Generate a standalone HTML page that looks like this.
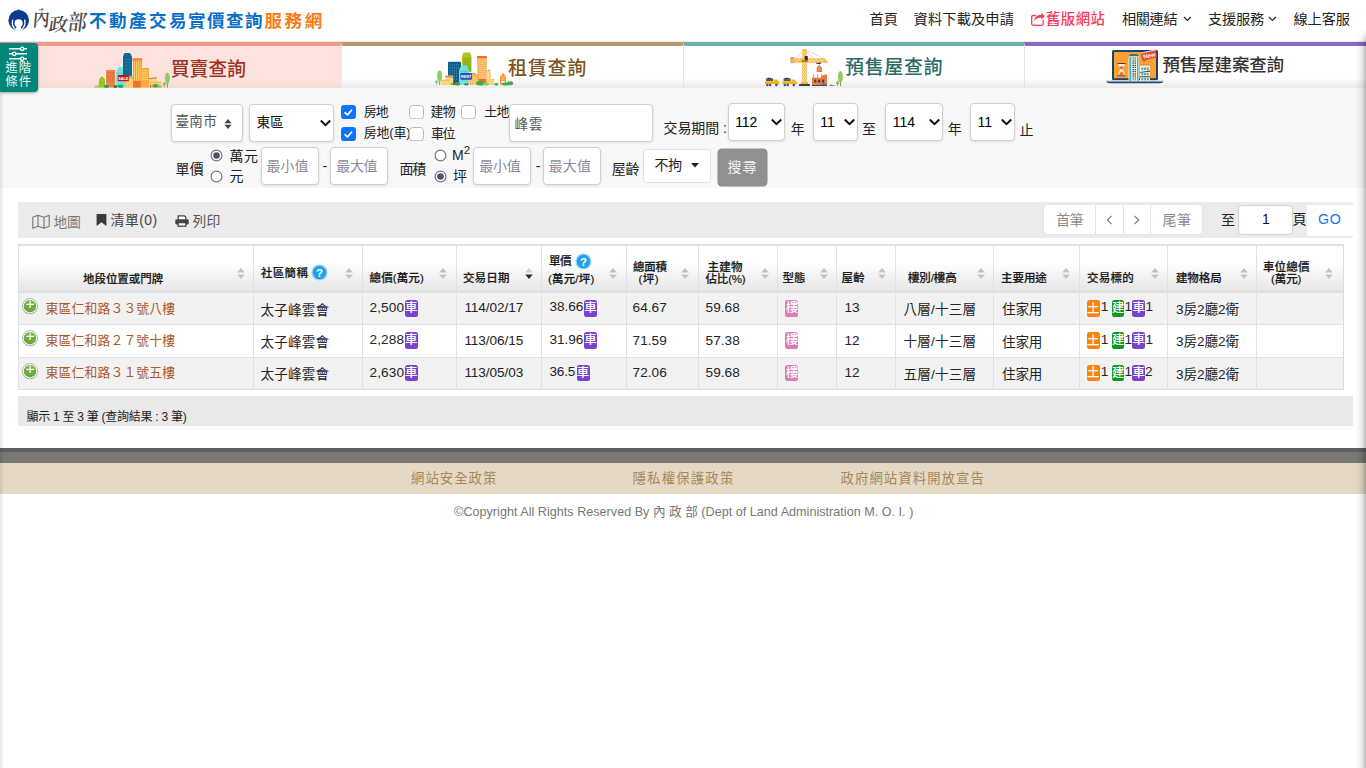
<!DOCTYPE html>
<html lang="zh-Hant"><head><meta charset="utf-8"><title>內政部不動產交易實價查詢服務網</title>
<style>
html,body{margin:0;padding:0;background:#fff;width:1366px;height:768px;overflow:hidden}
body{position:relative;font-family:"Liberation Sans","Noto Sans CJK TC",sans-serif;-webkit-font-smoothing:antialiased}
.b{position:absolute;display:block}
.t{position:absolute;white-space:nowrap;line-height:1.2;font-family:"Liberation Sans","Noto Sans CJK TC",sans-serif}
</style></head><body>
<svg class="b" width="0" height="0" style="left:0;top:0"><defs><linearGradient id="pgrad" x1="0" y1="0" x2="0" y2="1"><stop offset="0" stop-color="#79b843"/><stop offset="1" stop-color="#66a834"/></linearGradient></defs></svg>
<header class="b" style="left:0;top:0;width:1366px;height:42px;background:#fff">
<svg class="b" style="left:6px;top:6px" width="26" height="26" viewBox="6 6 26 26">
<circle cx="18.700" cy="20.400" r="10.300" fill="#083a8e"/><path d="M16.600 11.200q1.400-.6 2-2.100.7 1.500 2.100 2.100z" fill="#083a8e"/>
<circle cx="18.600" cy="23.300" r="4.100" fill="#fff"/><path d="M16.700 26.200l-1.700 5.200h7.300l-1.700-5.200z" fill="#fff"/>
<path d="M12.700 19.600c-1.100 4.300.200 8 3.600 10.500M24.600 19.600c1.100 4.300-.200 8-3.600 10.500" stroke="#fff" stroke-width="1.350" fill="none"/>
</svg>
<span class="t" id="moi1" style="left:32.50px;top:7.00px;font-size:17px;color:#4a4a4a;font-weight:600;font-family:'Noto Serif CJK SC','Liberation Serif',serif;transform-origin:0 50%;transform:scaleY(1.25) skewX(-6deg);">內</span>
<span class="t" id="moi2" style="left:48.50px;top:12.20px;font-size:19px;color:#4a4a4a;font-weight:600;font-family:'Noto Serif CJK SC','Liberation Serif',serif;transform-origin:0 50%;transform:scaleY(.95) skewX(-8deg);">政</span>
<span class="t" id="moi3" style="left:68.00px;top:9.80px;font-size:19px;color:#4a4a4a;font-weight:600;font-family:'Noto Serif CJK SC','Liberation Serif',serif;transform-origin:0 50%;transform:scaleY(1.15) skewX(-8deg);">部</span>
<span class="t" id="title1" style="left:89.00px;top:10.65px;font-size:17.5px;color:#0b6fc9;font-weight:700;"><span style="letter-spacing:2.5px">不動產交</span><span style="letter-spacing:1.5px">易實價查</span>詢</span>
<span class="t" id="title2" style="left:264.50px;top:10.65px;font-size:17.5px;color:#fa7c16;font-weight:700;letter-spacing:2.625px;">服務網</span>
<span class="t" id="nav1" style="left:869.40px;top:10.70px;font-size:14.2px;color:#222;letter-spacing:0.180px;">首頁</span>
<span class="t" id="nav2" style="left:913.60px;top:10.70px;font-size:14.2px;color:#222;letter-spacing:0.165px;">資料下載及申請</span>
<svg class="b" style="left:1030px;top:12px" width="16" height="15" viewBox="1030 12 16 15"><path d="M1035.600 15.500h-2.400a1.500 1.500 0 0 0-1.500 1.500v6.800a1.500 1.500 0 0 0 1.500 1.500h8.400a1.500 1.500 0 0 0 1.500-1.500v-3.300" fill="none" stroke="#f6395c" stroke-width="1.300" stroke-linecap="round"/><path d="M1041.200 12.700l3.700 3.400-3.700 3.500v-2.200c-3.200 0-5.400 1.200-7.100 3.700.300-3.900 3.200-6.200 7.100-6.300z" fill="#f6395c"/></svg>
<span class="t" id="nav3" style="left:1046.00px;top:10.97px;font-size:14.4px;color:#f6395c;font-weight:500;letter-spacing:0.480px;">舊版網站</span>
<span class="t" id="nav4" style="left:1121.90px;top:10.70px;font-size:14.2px;color:#222;letter-spacing:-0.330px;">相關連結</span>
<svg class="b" style="left:1182.700px;top:16.200px" width="9" height="6" viewBox="0 0 9 6" fill="none" stroke="#222" stroke-width="1.150"><path d="M1 1l3.400 3.500L7.800 1"/></svg>
<span class="t" id="nav5" style="left:1207.90px;top:10.70px;font-size:14.2px;color:#222;letter-spacing:-0.120px;">支援服務</span>
<svg class="b" style="left:1268.300px;top:16.200px" width="9" height="6" viewBox="0 0 9 6" fill="none" stroke="#222" stroke-width="1.150"><path d="M1 1l3.400 3.500L7.800 1"/></svg>
<span class="t" id="nav6" style="left:1293.40px;top:10.70px;font-size:14.2px;color:#222;letter-spacing:-0.030px;">線上客服</span>
</header>
<nav class="b" style="left:0;top:41px;width:1366px;height:47px">
<div class="b" style="left:0px;top:1px;width:341px;height:46px;background:linear-gradient(#fde3df 0,#fde3df 78%,#f9dad5 100%);border-top:4px solid #ee9b8d;box-sizing:border-box"></div>
<div class="b" style="left:341px;top:1px;width:342px;height:46px;background:linear-gradient(#fff 0,#fff 76%,#ebebeb 100%);border-top:4px solid #b9996d;box-sizing:border-box;border-left:1px solid #ececec"></div>
<div class="b" style="left:683px;top:1px;width:341px;height:46px;background:linear-gradient(#fff 0,#fff 76%,#ebebeb 100%);border-top:4px solid #6fb1a8;box-sizing:border-box;border-left:1px solid #e4e4e4"></div>
<div class="b" style="left:1024px;top:1px;width:342px;height:46px;background:linear-gradient(#fff 0,#fff 76%,#ebebeb 100%);border-top:4px solid #8869c4;box-sizing:border-box;border-left:1px solid #e4e4e4"></div>
<div class="b" style="left:0px;top:0px;width:1366px;height:1px;background:#e8e8e8"></div>
</nav>
<svg class="b" style="left:90px;top:46px" width="90" height="46" viewBox="90 46 90 46">
<ellipse cx="97.5" cy="86.6" rx="3.6" ry="1.6" fill="#a9da6e"/>
<path d="M98.9 87.5v-6.5q0-2 1.6-3.4l1.5-1.6 1.5 1.6q1.6 1.4 1.6 3.4v6.500z" fill="#9cc52c"/>
<path d="M99.6 81.5h4.800M99.400 83.500h5.200" stroke="#8db322" stroke-width=".6"/>
<rect x="106.1" y="70" width="9" height="17.5" rx=".5" fill="#f0804a"/>
<g fill="#d9622f"><rect x="107.4" y="72" width="1.400" height=".9"/><rect x="109.9" y="72" width="1.400" height=".9"/><rect x="112.4" y="72" width="1.400" height=".9"/><rect x="107.4" y="74.2" width="1.400" height=".9"/><rect x="109.9" y="74.2" width="1.400" height=".9"/><rect x="112.4" y="74.2" width="1.400" height=".9"/><rect x="107.4" y="76.4" width="1.400" height=".9"/><rect x="109.9" y="76.4" width="1.400" height=".9"/><rect x="112.4" y="76.4" width="1.400" height=".9"/><rect x="107.4" y="78.6" width="1.400" height=".9"/><rect x="109.9" y="78.6" width="1.400" height=".9"/><rect x="112.4" y="78.6" width="1.400" height=".9"/><rect x="107.4" y="80.8" width="1.400" height=".9"/><rect x="109.9" y="80.8" width="1.400" height=".9"/><rect x="112.4" y="80.8" width="1.400" height=".9"/></g>
<path d="M116 87.5v-15.500l1.300-2.600 1.400-2.400h4.600l1.300 2.400 1 2.600v15.500z" fill="#72e1e0"/>
<path d="M117.500 72.500h6.500v1.800h-6.500z" fill="#4fcfd2" opacity=".7"/>
<path d="M123 75v-18.500l.9-2.200.8-1.300h5.300l.8 1.300 1.200 2.200v18.500l-3 5.500h-3.500z" fill="#0e6a8f"/>
<g stroke="#3b8bab" stroke-width=".8"><path d="M124.800 59.500h5.600M124.800 62.500h5.600M124.800 65.800h5.600M124.800 69h5.600"/></g>
<g stroke="#0e6a8f" stroke-width=".5"><path d="M126.200 58v13M127.600 58v13M129 58v13"/></g>
<rect x="125.6" y="77.2" width="7.600" height="10.300" fill="#f9b94c"/>
<rect x="125.4" y="75.800" width="7.800" height="1.700" fill="#7fc87a"/>
<g fill="#fbd77a"><rect x="127" y="79" width="1.300" height="8.500"/><rect x="129.400" y="79" width="1.300" height="8.500"/><rect x="131.600" y="79" width="1.200" height="8.500"/></g>
<rect x="132.600" y="58.300" width="9.800" height="2.200" fill="#f07a3e"/>
<rect x="133" y="60.300" width="9" height="27.200" fill="#f8973a"/>
<g fill="#fcd36e"><rect x="134.100" y="61.500" width=".9" height="19.200"/><rect x="136" y="61.500" width=".9" height="19.200"/><rect x="137.900" y="61.500" width=".9" height="19.200"/><rect x="139.800" y="61.500" width=".9" height="19.200"/></g>
<rect x="133" y="81" width="8" height="6.500" fill="#ef7137"/>
<rect x="140.700" y="68" width="8.300" height="19.500" fill="#ffa83c"/>
<g fill="#ffd66e"><rect x="141.800" y="70" width="6" height=".9"/><rect x="141.800" y="72.300" width="6" height=".9"/><rect x="141.800" y="74.600" width="6" height=".9"/><rect x="141.800" y="76.900" width="6" height=".9"/><rect x="141.800" y="79.200" width="6" height=".9"/></g>
<rect x="149" y="78" width="7.800" height="9.500" fill="#f6dd7e"/>
<path d="M149 78.300l7.800-1.100v1l-7.800 1.100z" fill="#ea5a40"/>
<rect x="149" y="82" width="12" height="5.500" fill="#f4d078"/>
<rect x="149" y="81.700" width="12" height=".8" fill="#f0a060"/>
<rect x="150" y="85" width="1.300" height="2.500" fill="#e9573e"/>
<ellipse cx="106.400" cy="86.300" rx="2.700" ry="1.600" fill="#2f9f48"/>
<ellipse cx="115.400" cy="86.600" rx="2" ry="1.300" fill="#1f7f3d"/>
<ellipse cx="120.500" cy="86.200" rx="3.200" ry="1.700" fill="#35a84c"/>
<ellipse cx="155.500" cy="85.800" rx="3.200" ry="1.900" fill="#3fae49"/>
<ellipse cx="160" cy="86.500" rx="2.300" ry="1.300" fill="#8fd14f"/>
<rect x="123" y="80.800" width=".7" height="6.700" fill="#b9b9c6"/>
<rect x="117.800" y="75" width="11.100" height="6.300" rx="1" fill="#c4161c"/>
<text x="123.350" y="79.750" text-anchor="middle" font-family="Liberation Sans,sans-serif" font-weight="700" font-size="3.800" fill="#fff">SALE</text>
<rect x="167" y="79" width=".8" height="8.500" fill="#a0664a"/>
<ellipse cx="167.400" cy="78.200" rx="2.400" ry="5.600" fill="#8dcf5f"/>
<rect x="164.100" y="84" width=".6" height="3.500" fill="#a0664a"/>
<circle cx="164.400" cy="83.800" r="1.600" fill="#7cc850"/>
</svg>
<svg class="b" style="left:430px;top:46px" width="90" height="46" viewBox="430 46 90 46">
<rect x="439.300" y="78" width=".8" height="7" fill="#a0664a"/>
<ellipse cx="439.600" cy="75.800" rx="2.500" ry="5.600" fill="#8dcf5f"/>
<rect x="436.300" y="82" width=".6" height="3" fill="#c9a08a"/>
<circle cx="436.600" cy="81.800" r="1.600" fill="#8dd35f"/>
<rect x="448" y="61.700" width="13" height="23.300" rx=".8" fill="#0f5f8a"/>
<g fill="#4a93b6"><rect x="449.700" y="64.200" width=".7" height="1.600"/><rect x="451.800" y="64.200" width=".7" height="1.600"/><rect x="453.900" y="64.200" width=".7" height="1.600"/><rect x="456" y="64.200" width=".7" height="1.600"/><rect x="458.100" y="64.200" width=".7" height="1.600"/><rect x="449.700" y="67" width=".7" height="1.600"/><rect x="451.800" y="67" width=".7" height="1.600"/><rect x="453.900" y="67" width=".7" height="1.600"/><rect x="456" y="67" width=".7" height="1.600"/><rect x="458.100" y="67" width=".7" height="1.600"/><rect x="449.700" y="69.800" width=".7" height="1.600"/><rect x="451.800" y="69.800" width=".7" height="1.600"/><rect x="453.900" y="69.800" width=".7" height="1.600"/><rect x="456" y="69.800" width=".7" height="1.600"/><rect x="449.700" y="72.600" width=".7" height="1.600"/><rect x="451.800" y="72.600" width=".7" height="1.600"/><rect x="453.900" y="72.600" width=".7" height="1.600"/><rect x="456" y="72.600" width=".7" height="1.600"/><rect x="453.900" y="75.400" width=".7" height="1.600"/><rect x="456" y="75.400" width=".7" height="1.600"/><rect x="453.900" y="78.200" width=".7" height="1.600"/><rect x="456" y="78.200" width=".7" height="1.600"/></g>
<rect x="441" y="80" width="12" height="5" fill="#f7d876"/>
<rect x="445.500" y="75.500" width="7.700" height="9.500" fill="#f7d876"/>
<path d="M445 75.800l8.200 1v.9l-8.200-1z" fill="#ea5a40"/>
<rect x="441" y="79.800" width="8" height=".8" fill="#f2a468"/>
<rect x="451.200" y="83" width="1.300" height="2" fill="#e9573e"/>
<path d="M462 72v-16l.8-1.500.9-2h6.300l.9 2 .6 1.500v16z" fill="#a9c621"/>
<g stroke="#7f9c12" stroke-width=".9"><path d="M464 57.500v14M466 57.500v14M468 57.500v14M470 57.500v14"/></g>
<path d="M459 85v-14.500l1.200-2.700 1.300-2.600h5l1.300 2.600 1.200 2.700v14.500z" fill="#72e1e0"/>
<rect x="460.200" y="70.300" width="7.600" height="2.200" fill="#4fcfd2" opacity=".7"/>
<rect x="469.500" y="74.300" width="9.700" height="10.700" fill="#f9b14c"/>
<rect x="469.300" y="72.900" width="6.500" height="1.800" fill="#7fc87a"/>
<g fill="#fbd47a"><rect x="471" y="76.500" width="1.200" height="8.500"/><rect x="473.300" y="76.500" width="1.200" height="8.500"/><rect x="475.600" y="76.500" width="1.200" height="8.500"/></g>
<rect x="477" y="56" width="10" height="2.200" rx=".5" fill="#f06a35"/>
<rect x="477.300" y="58" width="9.400" height="27" fill="#f9a65e"/>
<g fill="#fcd47a"><rect x="478.300" y="59.300" width="7.400" height=".9"/><rect x="478.300" y="61.300" width="7.400" height=".9"/><rect x="478.300" y="63.300" width="7.400" height=".9"/><rect x="478.300" y="65.300" width="7.400" height=".9"/><rect x="478.300" y="67.300" width="7.400" height=".9"/><rect x="478.300" y="69.300" width="7.400" height=".9"/><rect x="478.300" y="71.300" width="7.400" height=".9"/><rect x="478.300" y="73.300" width="7.400" height=".9"/><rect x="478.300" y="75.300" width="7.400" height=".9"/><rect x="478.300" y="77.300" width="7.400" height=".9"/></g>
<rect x="479" y="79" width="7" height="6" fill="#ee6a37"/>
<path d="M486.700 85v-13.300l1-1.700h2.300l1 1.700v13.300z" fill="#f5d47c"/>
<rect x="488" y="69.800" width="2" height="1" fill="#f4845a"/>
<g fill="#fff4c8"><rect x="488.400" y="73" width=".9" height=".9"/><rect x="488.400" y="75" width=".9" height=".9"/><rect x="488.400" y="77" width=".9" height=".9"/><rect x="488.400" y="79" width=".9" height=".9"/></g>
<rect x="491" y="79.500" width="3.200" height="5.500" fill="#f5d47c"/>
<rect x="491.600" y="79" width="2" height=".8" fill="#f4845a"/>
<ellipse cx="457.200" cy="83.700" rx="3" ry="1.800" fill="#4a9a2a"/>
<ellipse cx="466.300" cy="84.300" rx="1.900" ry="1.200" fill="#1f8a3d"/>
<ellipse cx="480.300" cy="83.200" rx="4.300" ry="2.300" fill="#3fae49"/>
<ellipse cx="486" cy="84" rx="3" ry="1.500" fill="#8fd14f"/>
<ellipse cx="496.300" cy="84.200" rx="2.100" ry="1.200" fill="#3fae49"/>
<rect x="466" y="79.500" width=".7" height="5" fill="#b9b9c6"/>
<rect x="460.300" y="73" width="11.700" height="6.700" rx=".8" fill="#2f4fb5"/>
<text x="466.150" y="77.950" text-anchor="middle" font-family="Liberation Sans,sans-serif" font-weight="700" font-size="3.800" fill="#fff">RENT</text>
<path d="M500 85v-8.500l1.200-1.500 1.800-2.200 1.800 2.200 1.200 1.500v8.500z" fill="#fb9b34"/>
<rect x="501.100" y="77.300" width="3.800" height=".8" fill="#fdc070"/><rect x="501.100" y="79" width="3.800" height=".8" fill="#fdc070"/>
<rect x="501.200" y="81" width="3.600" height="1.600" fill="#fff"/>
<ellipse cx="505.500" cy="83.900" rx="3.500" ry="1.500" fill="#3fae49"/>
<ellipse cx="510" cy="83.200" rx="3.200" ry="2" fill="#3fae49"/>
</svg>
<svg class="b" style="left:760px;top:46px" width="90" height="46" viewBox="760 46 90 46">
<g><rect x="766" y="78.300" width="7.200" height="3" rx=".8" fill="#4d5d7c"/><rect x="767.500" y="77.800" width="3.500" height="1.200" fill="#3a3a3a"/><rect x="765" y="81" width="14" height="3" rx=".5" fill="#f6c51c"/><path d="M773.800 84v-4.600h3.300l1.700 1.800v2.800z" fill="#f6c51c"/><rect x="775" y="80" width="2.300" height="1.500" fill="#c9b04a"/><rect x="765" y="82.600" width="14" height=".7" fill="#e0a010"/><circle cx="767.300" cy="85" r="1.250" fill="#42506e"/><circle cx="770.200" cy="85" r="1.250" fill="#42506e"/><circle cx="776.300" cy="85" r="1.250" fill="#42506e"/><rect x="778.600" y="83" width=".6" height="1.300" fill="#e9573e"/></g>
<g transform="translate(17.500 0)"><rect x="766" y="78.300" width="7.200" height="3" rx=".8" fill="#4d5d7c"/><rect x="767.500" y="77.800" width="3.500" height="1.200" fill="#3a3a3a"/><rect x="765" y="81" width="14" height="3" rx=".5" fill="#f6c51c"/><path d="M773.800 84v-4.600h3.300l1.700 1.800v2.800z" fill="#f6c51c"/><rect x="775" y="80" width="2.300" height="1.500" fill="#c9b04a"/><rect x="765" y="82.600" width="14" height=".7" fill="#e0a010"/><circle cx="767.300" cy="85" r="1.250" fill="#42506e"/><circle cx="770.200" cy="85" r="1.250" fill="#42506e"/><circle cx="776.300" cy="85" r="1.250" fill="#42506e"/><rect x="778.600" y="83" width=".6" height="1.300" fill="#e9573e"/></g>
<g stroke="#8f98ab" stroke-width=".35" fill="none"><path d="M804.500 49.600L794.500 58.500M804.500 49.600L813.500 58.500M804.500 49.600L825 58.800"/></g>
<rect x="790.400" y="57" width="3.800" height="6.300" rx=".6" fill="#9ba8c2"/>
<rect x="791.200" y="58" width="2.200" height="4.300" fill="#8794b0"/>
<path d="M790.500 58.300h33.500l4.300 4v.5h-37.800z" fill="#f8b94a"/>
<path d="M795 59l2 3 2-3 2 3M808 59l2 3 2-3 2 3 2-3 2 3 2-3 2 3 1.500-2.500" stroke="#fff" stroke-width=".55" fill="none" opacity=".85"/>
<rect x="802.300" y="49.300" width="4.400" height="34.700" fill="#f8b94a"/>
<rect x="802.800" y="49" width="3.400" height="1.500" fill="#f6c64a"/>
<path d="M803 63l3 3-3 3 3 3-3 3 3 3-3 3 3 3M806 63l-3 3 3 3-3 3 3 3-3 3 3 3-3 3" stroke="#fff" stroke-width=".55" fill="none" opacity=".85"/>
<path d="M803 51l3 3-3 3M806 51l-3 3 3 3" stroke="#fff" stroke-width=".5" fill="none" opacity=".6"/>
<rect x="804.800" y="56" width="3" height="4.300" rx=".4" fill="#2b2b3a"/>
<rect x="801.500" y="60.600" width="6.500" height=".9" fill="#5a4a2a"/>
<path d="M816 62.800h5.500l-.8 1.300h-3.900z" fill="#3b3b3b"/>
<path d="M819.300 64v2" stroke="#8f98ab" stroke-width=".4"/>
<path d="M817.300 68q2-3.800 4 0" stroke="#2b2b3a" stroke-width=".8" fill="none"/>
<rect x="816.600" y="67.500" width="5.400" height="4.500" rx=".5" fill="#f4793b"/>
<path d="M817.500 70q1.800-1.600 3.600 0" stroke="#fbb48a" stroke-width=".5" fill="none"/>
<rect x="801" y="82" width="7" height="2.200" fill="#f0b030"/>
<rect x="799" y="84" width="11" height="2" rx=".4" fill="#3d3d4a"/>
<g fill="#8d99ae"><rect x="813.300" y="74" width=".9" height="4"/><rect x="817.300" y="74" width=".9" height="4"/><rect x="821.200" y="74" width=".9" height="4"/></g>
<path d="M812 86v-8.300h8.500l2.500-2.700h1.500l.7-.6h1.200l.6.600v11z" fill="#f4793b"/>
<rect x="824.500" y="73.800" width="2" height="1" rx=".4" fill="#b9c6d9"/>
<g fill="#3d3d4a"><rect x="814.300" y="79.600" width="2" height="3"/><rect x="818.200" y="79.600" width="2" height="3"/><rect x="822.100" y="79.600" width="2" height="3"/></g>
<path d="M820.500 85l2.500-1.800h4v1.800z" fill="#5a7a9a"/>
<rect x="812" y="85" width="15" height="1" fill="#3d4a66"/>
<path d="M829 86q1-1.800 2.800-1.300 1.500.5 3.500.9v.4z" fill="#5cb531"/>
<rect x="840.100" y="79" width=".8" height="7" fill="#a0664a"/>
<ellipse cx="840.400" cy="76.800" rx="2.500" ry="5.900" fill="#8dcf5f"/>
<rect x="837.300" y="83" width=".6" height="3" fill="#a0664a"/>
<path d="M837.600 80.600l1.700 3.300h-3.400z" fill="#7cc850"/><circle cx="837.600" cy="83" r="1.500" fill="#7cc850"/>
</svg>
<svg class="b" style="left:1100px;top:46px" width="70" height="42" viewBox="1100 46 70 42">
<rect x="1112" y="50" width="46" height="30.300" rx="1.600" fill="#1d4369"/>
<rect x="1114" y="52" width="42" height="26.200" fill="#ffa030"/>
<path d="M1105.800 80.800h58q-.8 2.500-4.500 2.500h-49q-3.700 0-4.500-2.500z" fill="#1d4369"/>
<path d="M1105.800 80.600h58v1h-58z" fill="#eef2f7"/>
<rect x="1117.500" y="63" width="8" height="1.100" fill="#3a3a4a"/><rect x="1117.500" y="75.200" width="8" height="1.100" fill="#3a3a4a"/>
<path d="M1118.300 64.100h6.400q0 3.300-2.200 5.500 2.200 2.200 2.200 5.600h-6.400q0-3.400 2.200-5.600-2.200-2.200-2.200-5.500z" fill="#fff6e6"/>
<path d="M1119 66.500h5q-.5 1.800-2.500 3.100-2-1.300-2.500-3.100zM1119 75.200q.3-2.600 2.500-3.600 2.200 1 2.500 3.600z" fill="#f0643c"/>
<path d="M1128 56.500l2.800-2.500h6l2.800 2.500z" fill="#1c7c94"/>
<rect x="1128.500" y="56.300" width="10.600" height="24.700" fill="#fdf3d8"/>
<rect x="1129.300" y="57" width="2" height="24" fill="#49b3cb"/>
<rect x="1137" y="57" width="1.500" height="24" fill="#49b3cb"/>
<g stroke="#1a5f7a" stroke-width="1.500" stroke-dasharray="1.100 .8"><path d="M1133.200 57.500v23M1135.300 57.500v23"/></g>
<rect x="1140" y="65.500" width="10" height="15.500" fill="#fbeccb"/>
<g fill="#6f7f96"><rect x="1141" y="64" width=".6" height="1.600"/><rect x="1143.500" y="64" width=".6" height="1.600"/><rect x="1146" y="64" width=".6" height="1.600"/><rect x="1148.500" y="64" width=".6" height="1.600"/></g>
<g fill="#27a4dc"><rect x="1141.500" y="67.500" width="1.700" height="2.500"/><rect x="1144.200" y="67.500" width="1.700" height="2.500"/><rect x="1146.900" y="67.500" width="1.700" height="2.500"/><rect x="1141.500" y="73" width="1.700" height="2.300"/><rect x="1144.200" y="73" width="1.700" height="2.300"/><rect x="1146.900" y="73" width="1.700" height="2.300"/><rect x="1141.500" y="78" width="1.700" height="2.300"/><rect x="1144.200" y="78" width="1.700" height="2.300"/><rect x="1146.900" y="78" width="1.700" height="2.300"/></g>
<path d="M1140 72l10-1.500v1.200l-10 1zM1140 76.300h10v1h-10z" fill="#2d4a6a"/>
<g transform="rotate(-13 1149 55)"><path d="M1141.300 51h15.800l-1 8h-11.500l-2.600 2.300.6-2.300h-1.300z" fill="#e4472e"/><path d="M1141.300 51h15.800l-.1.900h-15.700z" fill="#f3f3f3" opacity=".85"/>
<text x="1149.200" y="57.600" text-anchor="middle" font-family="Liberation Sans,sans-serif" font-weight="700" font-size="6" fill="#fff">New</text></g>
</svg>

<span class="t" id="tab1" style="left:170.70px;top:59.06px;font-size:19px;color:#9b3424;font-weight:500;letter-spacing:-0.210px;">買賣查詢</span>
<span class="t" id="tab2" style="left:508.00px;top:57.76px;font-size:19px;color:#7a5626;font-weight:500;letter-spacing:0.750px;">租賃查詢</span>
<span class="t" id="tab3" style="left:845.00px;top:57.26px;font-size:19px;color:#2b6b66;font-weight:500;letter-spacing:0.638px;">預售屋查詢</span>
<span class="t" id="tab4" style="left:1162.50px;top:55.20px;font-size:17.5px;color:#333;font-weight:500;letter-spacing:-0.150px;">預售屋建案查詢</span>
<div class="b" style="left:0px;top:88px;width:1366px;height:100px;background:#f8f8f8"></div>
<div class="b" style="left:171px;top:104px;width:72px;height:38px;background:#fff;border:1px solid #d0d0d0;border-radius:4px;box-sizing:border-box;box-shadow:0 1px 3px rgba(0,0,0,.1);"></div>
<span class="t" id="sel1" style="left:175.50px;top:114.18px;font-size:13.6px;color:#555;letter-spacing:0.225px;">臺南市</span>
<svg class="b" style="left:223.5px;top:118.5px" width="8" height="10" viewBox="0 0 8 10" fill="#444"><path d="M4 0l3.6 4.2H.4zM4 10L.4 5.8h7.2z"/></svg>
<div class="b" style="left:249px;top:104px;width:85px;height:38px;background:#fff;border:1px solid #d0d0d0;border-radius:4px;box-sizing:border-box;box-shadow:0 1px 3px rgba(0,0,0,.1);"></div>
<span class="t" id="sel2" style="left:256.50px;top:114.63px;font-size:13.6px;color:#111;">東區</span>
<svg class="b" style="left:320px;top:119.5px" width="11" height="7" viewBox="0 0 11 7" fill="none" stroke="#111" stroke-width="2" stroke-linecap="square"><path d="M1.5 1.2l4 4 4-4"/></svg>
<svg class="b" style="left:341px;top:104.7px" width="15" height="14.300" viewBox="0 0 15 14.300"><rect x="0" y="0" width="15" height="14.300" rx="3.200" fill="#0d75fd"/><path d="M4 7.700l2.500 2.200 4-4.700" fill="none" stroke="#fff" stroke-width="1.700" stroke-linecap="round" stroke-linejoin="round"/></svg>
<span class="t" id="cb1" style="left:363.75px;top:103.72px;font-size:13px;color:#222;letter-spacing:-1.125px;">房地</span>
<svg class="b" style="left:341px;top:126.8px" width="15" height="14.300" viewBox="0 0 15 14.300"><rect x="0" y="0" width="15" height="14.300" rx="3.200" fill="#0d75fd"/><path d="M4 7.700l2.500 2.200 4-4.700" fill="none" stroke="#fff" stroke-width="1.700" stroke-linecap="round" stroke-linejoin="round"/></svg>
<span class="t" id="cb2" style="left:363.75px;top:125.42px;font-size:13px;color:#222;letter-spacing:-0.225px;">房地(車)</span>
<svg class="b" style="left:409px;top:104.7px" width="15" height="14.300" viewBox="0 0 15 14.300"><rect x=".5" y=".5" width="14" height="13.300" rx="3.200" fill="#fff" stroke="#b3bac5" stroke-width="1"/></svg>
<span class="t" id="cb3" style="left:430.50px;top:103.72px;font-size:13px;color:#222;letter-spacing:-0.855px;">建物</span>
<svg class="b" style="left:409px;top:126.8px" width="15" height="14.300" viewBox="0 0 15 14.300"><rect x=".5" y=".5" width="14" height="13.300" rx="3.200" fill="#fff" stroke="#b3bac5" stroke-width="1"/></svg>
<span class="t" id="cb4" style="left:431.00px;top:125.72px;font-size:13px;color:#222;letter-spacing:-1.530px;">車位</span>
<svg class="b" style="left:461.3px;top:104.7px" width="15" height="14.300" viewBox="0 0 15 14.300"><rect x=".5" y=".5" width="14" height="13.300" rx="3.200" fill="#fff" stroke="#b3bac5" stroke-width="1"/></svg>
<span class="t" id="cb5" style="left:484.30px;top:103.72px;font-size:13px;color:#222;letter-spacing:-0.855px;">土地</span>
<div class="b" style="left:509px;top:104px;width:144px;height:38px;background:#fff;border:1px solid #d0d0d0;border-radius:4px;box-sizing:border-box;box-shadow:0 1px 3px rgba(0,0,0,.1);"></div>
<span class="t" id="kw" style="left:514.50px;top:116.67px;font-size:13.6px;color:#555;letter-spacing:0.630px;">峰雲</span>
<span class="t" id="period" style="left:663.50px;top:120.16px;font-size:14px;color:#222;letter-spacing:-0.090px;">交易期間 :</span>
<div class="b" style="left:728px;top:103px;width:57px;height:38px;background:#fff;border:1px solid #d0d0d0;border-radius:4px;box-sizing:border-box;box-shadow:0 1px 3px rgba(0,0,0,.1);"></div>
<span class="t" id="y1" style="left:735.30px;top:114.46px;font-size:14px;color:#000;letter-spacing:-0.180px;">112</span>
<svg class="b" style="left:770.7px;top:118.8px" width="11" height="7" viewBox="0 0 11 7" fill="none" stroke="#111" stroke-width="2" stroke-linecap="square"><path d="M1.5 1.2l4 4 4-4"/></svg>
<span class="t" id="nian1" style="left:790.70px;top:120.81px;font-size:14px;color:#222;">年</span>
<div class="b" style="left:813px;top:103px;width:45px;height:38px;background:#fff;border:1px solid #d0d0d0;border-radius:4px;box-sizing:border-box;box-shadow:0 1px 3px rgba(0,0,0,.1);"></div>
<span class="t" id="m1" style="left:820.30px;top:113.98px;font-size:14px;color:#000;">11</span>
<svg class="b" style="left:843.8px;top:118.8px" width="11" height="7" viewBox="0 0 11 7" fill="none" stroke="#111" stroke-width="2" stroke-linecap="square"><path d="M1.5 1.2l4 4 4-4"/></svg>
<span class="t" id="zhi" style="left:862.00px;top:120.81px;font-size:14px;color:#222;">至</span>
<div class="b" style="left:885px;top:103px;width:58px;height:38px;background:#fff;border:1px solid #d0d0d0;border-radius:4px;box-sizing:border-box;box-shadow:0 1px 3px rgba(0,0,0,.1);"></div>
<span class="t" id="y2" style="left:892.70px;top:114.46px;font-size:14px;color:#000;letter-spacing:-0.045px;">114</span>
<svg class="b" style="left:928.8px;top:118.8px" width="11" height="7" viewBox="0 0 11 7" fill="none" stroke="#111" stroke-width="2" stroke-linecap="square"><path d="M1.5 1.2l4 4 4-4"/></svg>
<span class="t" id="nian2" style="left:947.75px;top:120.81px;font-size:14px;color:#222;">年</span>
<div class="b" style="left:970px;top:103px;width:45px;height:38px;background:#fff;border:1px solid #d0d0d0;border-radius:4px;box-sizing:border-box;box-shadow:0 1px 3px rgba(0,0,0,.1);"></div>
<span class="t" id="m2" style="left:977.40px;top:113.98px;font-size:14px;color:#000;">11</span>
<svg class="b" style="left:1000.6px;top:118.8px" width="11" height="7" viewBox="0 0 11 7" fill="none" stroke="#111" stroke-width="2" stroke-linecap="square"><path d="M1.5 1.2l4 4 4-4"/></svg>
<span class="t" id="zhi2" style="left:1019.50px;top:121.81px;font-size:14px;color:#222;">止</span>
<span class="t" id="unitp" style="left:175.50px;top:160.86px;font-size:14px;color:#222;letter-spacing:0.225px;">單價</span>
<svg class="b" style="left:210.4px;top:148.5px" width="13" height="13" viewBox="0 0 13 13"><circle cx="6.5" cy="6.5" r="5.400" fill="#fff" stroke="#6f7580" stroke-width="1.150"/><circle cx="6.5" cy="6.5" r="3.300" fill="#4c5565"/></svg>
<span class="t" id="r1" style="left:229.50px;top:147.66px;font-size:14px;color:#222;letter-spacing:0.450px;">萬元</span>
<svg class="b" style="left:210.4px;top:169.8px" width="13" height="13" viewBox="0 0 13 13"><circle cx="6.5" cy="6.5" r="5.400" fill="#fff" stroke="#6f7580" stroke-width="1.150"/></svg>
<span class="t" id="r2" style="left:229.60px;top:168.26px;font-size:14px;color:#222;">元</span>
<div class="b" style="left:261px;top:147px;width:58px;height:38px;background:#fff;border:1px solid #d0d0d0;border-radius:4px;box-sizing:border-box;box-shadow:0 1px 3px rgba(0,0,0,.1);"></div>
<span class="t" id="ph1" style="left:266.50px;top:158.16px;font-size:14px;color:#8b8b99;">最小值</span>
<span class="t" id="dash1" style="left:322.50px;top:158.41px;font-size:14px;color:#222;">-</span>
<div class="b" style="left:330px;top:147px;width:58px;height:38px;background:#fff;border:1px solid #d0d0d0;border-radius:4px;box-sizing:border-box;box-shadow:0 1px 3px rgba(0,0,0,.1);"></div>
<span class="t" id="ph2" style="left:336.25px;top:158.16px;font-size:14px;color:#8b8b99;letter-spacing:-0.338px;">最大值</span>
<span class="t" id="area" style="left:399.50px;top:160.86px;font-size:14px;color:#222;letter-spacing:-1.125px;">面積</span>
<svg class="b" style="left:433.5px;top:148.5px" width="13" height="13" viewBox="0 0 13 13"><circle cx="6.5" cy="6.5" r="5.400" fill="#fff" stroke="#6f7580" stroke-width="1.150"/></svg>
<span class="t" id="r3" style="left:452.10px;top:146.51px;font-size:14px;color:#222;">M<sup style="font-size:11.5px;vertical-align:6.5px;line-height:0">2</sup></span>
<svg class="b" style="left:433.5px;top:169.8px" width="13" height="13" viewBox="0 0 13 13"><circle cx="6.5" cy="6.5" r="5.400" fill="#fff" stroke="#6f7580" stroke-width="1.150"/><circle cx="6.5" cy="6.5" r="3.300" fill="#4c5565"/></svg>
<span class="t" id="r4" style="left:453.00px;top:168.26px;font-size:14px;color:#222;">坪</span>
<div class="b" style="left:473px;top:147px;width:58px;height:38px;background:#fff;border:1px solid #d0d0d0;border-radius:4px;box-sizing:border-box;box-shadow:0 1px 3px rgba(0,0,0,.1);"></div>
<span class="t" id="ph3" style="left:479.30px;top:158.16px;font-size:14px;color:#8b8b99;letter-spacing:-0.315px;">最小值</span>
<span class="t" id="dash2" style="left:535.70px;top:158.41px;font-size:14px;color:#222;">-</span>
<div class="b" style="left:543px;top:147px;width:58px;height:38px;background:#fff;border:1px solid #d0d0d0;border-radius:4px;box-sizing:border-box;box-shadow:0 1px 3px rgba(0,0,0,.1);"></div>
<span class="t" id="ph4" style="left:548.75px;top:158.16px;font-size:14px;color:#8b8b99;letter-spacing:0.113px;">最大值</span>
<span class="t" id="age" style="left:611.80px;top:160.56px;font-size:14px;color:#222;letter-spacing:-0.405px;">屋齡</span>
<div class="b" style="left:643px;top:149px;width:68px;height:34px;background:#fff;border:1px solid #dde3ea;border-radius:4px;box-sizing:border-box"></div>
<span class="t" id="agev" style="left:654.50px;top:157.16px;font-size:14px;color:#222;letter-spacing:-0.270px;">不拘</span>
<svg class="b" style="left:691.2px;top:162.8px" width="8" height="5" viewBox="0 0 8 5" fill="#222"><path d="M0 0h8L4 4.6z"/></svg>
<div class="b" style="left:718px;top:149px;width:49px;height:37px;background:#909090;border-radius:4px;box-shadow:0 0 0 .5px #858585"></div>
<span class="t" id="search" style="left:727.50px;top:158.86px;font-size:14px;color:#f2f2f2;letter-spacing:0.900px;">搜尋</span>
<div class="b" style="left:0px;top:43px;width:38px;height:49px;background:#00867a;border-radius:0 4px 4px 0;box-shadow:0 1px 3px rgba(0,0,0,.35)"><svg style="position:absolute;left:8px;top:3.2px" width="20" height="16" viewBox="0 0 20 16" stroke="#fff" fill="#00867a" stroke-width="1.4"><path d="M1 2.800h18M1 7.800h18M1 12.800h18"/><circle cx="14.200" cy="2.800" r="1.650"/><circle cx="6.200" cy="7.800" r="1.650"/><circle cx="14.200" cy="12.800" r="1.650"/></svg></div>
<span class="t" id="adv1" style="left:5.30px;top:61.11px;font-size:12.4px;color:#e8fbf4;letter-spacing:1.000px;">進階</span>
<span class="t" id="adv2" style="left:5.30px;top:75.16px;font-size:12.4px;color:#e8fbf4;letter-spacing:1.000px;">條件</span>
<div class="b" style="left:18px;top:202px;width:1335px;height:36px;background:#ebebeb"></div>
<svg class="b" style="left:31.5px;top:214px" width="18" height="15.500" viewBox="0 0 18 15" preserveAspectRatio="none" fill="none" stroke="#7a7a7a" stroke-width="1.15" stroke-linejoin="round"><path d="M.8 3.2L6 1.2l6 2 5.2-2v10.6L12 13.8l-6-2-5.2 2zM6 1.2v10.6M12 3.2v10.6"/></svg>
<span class="t" id="tl1" style="left:53.40px;top:214.52px;font-size:13.8px;color:#7a7a7a;letter-spacing:-0.090px;">地圖</span>
<svg class="b" style="left:95.8px;top:214.3px" width="11" height="12" viewBox="0 0 11 12" fill="#3a3a3a"><path d="M.6 0h9.8v12L5.5 8.3.6 12z"/></svg>
<span class="t" id="tl2" style="left:110.60px;top:213.47px;font-size:13.8px;color:#444;letter-spacing:0.495px;">清單(0)</span>
<svg class="b" style="left:174.5px;top:214.8px" width="14" height="12" viewBox="0 0 14 12"><path d="M3.2 4.4V.8h6.2l1.4 1.4v2.2" fill="#fff" stroke="#444" stroke-width="1.3"/><rect x=".3" y="4.2" width="13.4" height="5.4" rx="1.3" fill="#444"/><rect x="3.2" y="7.6" width="7.6" height="3.6" fill="#fff" stroke="#444" stroke-width="1.3"/></svg>
<span class="t" id="tl3" style="left:192.50px;top:213.57px;font-size:13.8px;color:#555;letter-spacing:0.090px;">列印</span>
<div class="b" style="left:1043px;top:204px;width:159.5px;height:31px;background:#fff;border:1px solid #e2e5e9;border-radius:4px;box-sizing:border-box"></div>
<div class="b" style="left:1094.8px;top:204.5px;width:1.0px;height:30.0px;background:#dfe3e7"></div>
<div class="b" style="left:1122.8px;top:204.5px;width:1.0px;height:30.0px;background:#dfe3e7"></div>
<div class="b" style="left:1149.8px;top:204.5px;width:1.0px;height:30.0px;background:#dfe3e7"></div>
<span class="t" id="pg1" style="left:1055.90px;top:212.16px;font-size:14px;color:#8a8a8a;letter-spacing:-0.450px;">首筆</span>
<svg class="b" style="left:1105.8px;top:214.6px" width="7" height="10" viewBox="0 0 7 10" fill="none" stroke="#777" stroke-width="1.1"><path d="M5.6 .8L1.2 5l4.4 4.2"/></svg>
<svg class="b" style="left:1133px;top:214.6px" width="7" height="10" viewBox="0 0 7 10" fill="none" stroke="#777" stroke-width="1.1"><path d="M1.4 .8L5.8 5 1.4 9.2"/></svg>
<span class="t" id="pg2" style="left:1162.50px;top:212.16px;font-size:14px;color:#8a8a8a;letter-spacing:0.450px;">尾筆</span>
<span class="t" id="pgzhi" style="left:1220.90px;top:211.71px;font-size:14px;color:#222;">至</span>
<div class="b" style="left:1238px;top:205px;width:55px;height:30px;background:#fff;border:1px solid #ced4da;border-radius:4px;box-sizing:border-box"></div>
<span class="t" id="pgn" style="left:1262.00px;top:211.01px;font-size:14px;color:#111;">1</span>
<span class="t" id="pgye" style="left:1292.60px;top:210.71px;font-size:14px;color:#222;">頁</span>
<div class="b" style="left:1306.5px;top:205px;width:46.0px;height:30.5px;background:#fff"></div>
<span class="t" id="go" style="left:1318.10px;top:211.19px;font-size:14.3px;color:#1a73e8;letter-spacing:0.540px;">GO</span>
<div class="b" style="left:18px;top:244px;width:1326px;height:48px;background:linear-gradient(#fff 0,#fff 40%,#e5e5e5 100%)"></div>
<div class="b" style="left:18px;top:293px;width:1326px;height:31px;background:#f2f2f2"></div>
<div class="b" style="left:18px;top:325px;width:1326px;height:32px;background:#fff"></div>
<div class="b" style="left:18px;top:358px;width:1326px;height:31px;background:#f2f2f2"></div>
<div class="b" style="left:18px;top:244px;width:1326px;height:2px;background:#dee2e6"></div>
<div class="b" style="left:18px;top:291px;width:1326px;height:2px;background:#dcdfe4"></div>
<div class="b" style="left:18px;top:324px;width:1326px;height:1px;background:#dee2e6"></div>
<div class="b" style="left:18px;top:357px;width:1326px;height:1px;background:#dee2e6"></div>
<div class="b" style="left:18px;top:389px;width:1326px;height:1.1999999999999886px;background:#d9dde2"></div>
<div class="b" style="left:18px;top:244px;width:1px;height:146px;background:#dee2e6"></div>
<div class="b" style="left:253px;top:244px;width:1px;height:146px;background:#dee2e6"></div>
<div class="b" style="left:362px;top:244px;width:1px;height:146px;background:#dee2e6"></div>
<div class="b" style="left:456px;top:244px;width:1px;height:146px;background:#dee2e6"></div>
<div class="b" style="left:541px;top:244px;width:1px;height:146px;background:#dee2e6"></div>
<div class="b" style="left:626px;top:244px;width:1px;height:146px;background:#dee2e6"></div>
<div class="b" style="left:698px;top:244px;width:1px;height:146px;background:#dee2e6"></div>
<div class="b" style="left:777px;top:244px;width:1px;height:146px;background:#dee2e6"></div>
<div class="b" style="left:836px;top:244px;width:1px;height:146px;background:#dee2e6"></div>
<div class="b" style="left:895px;top:244px;width:1px;height:146px;background:#dee2e6"></div>
<div class="b" style="left:993px;top:244px;width:1px;height:146px;background:#dee2e6"></div>
<div class="b" style="left:1079px;top:244px;width:1px;height:146px;background:#dee2e6"></div>
<div class="b" style="left:1167px;top:244px;width:1px;height:146px;background:#dee2e6"></div>
<div class="b" style="left:1256px;top:244px;width:1px;height:146px;background:#dee2e6"></div>
<div class="b" style="left:1342.5px;top:244px;width:1.5px;height:146px;background:#d9dde2"></div>
<svg class="b" style="left:237px;top:267.8px" width="8" height="11" viewBox="0 0 8 11"><path d="M4 0l3.8 4.6H.2z" fill="#c3c3c3"/><path d="M4 11L.2 6.4h7.6z" fill="#c3c3c3"/></svg>
<svg class="b" style="left:345px;top:267.8px" width="8" height="11" viewBox="0 0 8 11"><path d="M4 0l3.8 4.6H.2z" fill="#c3c3c3"/><path d="M4 11L.2 6.4h7.6z" fill="#c3c3c3"/></svg>
<svg class="b" style="left:439px;top:267.8px" width="8" height="11" viewBox="0 0 8 11"><path d="M4 0l3.8 4.6H.2z" fill="#c3c3c3"/><path d="M4 11L.2 6.4h7.6z" fill="#c3c3c3"/></svg>
<svg class="b" style="left:608.8px;top:267.8px" width="8" height="11" viewBox="0 0 8 11"><path d="M4 0l3.8 4.6H.2z" fill="#c3c3c3"/><path d="M4 11L.2 6.4h7.6z" fill="#c3c3c3"/></svg>
<svg class="b" style="left:681.3px;top:267.8px" width="8" height="11" viewBox="0 0 8 11"><path d="M4 0l3.8 4.6H.2z" fill="#c3c3c3"/><path d="M4 11L.2 6.4h7.6z" fill="#c3c3c3"/></svg>
<svg class="b" style="left:760.8px;top:267.8px" width="8" height="11" viewBox="0 0 8 11"><path d="M4 0l3.8 4.6H.2z" fill="#c3c3c3"/><path d="M4 11L.2 6.4h7.6z" fill="#c3c3c3"/></svg>
<svg class="b" style="left:819.7px;top:267.8px" width="8" height="11" viewBox="0 0 8 11"><path d="M4 0l3.8 4.6H.2z" fill="#c3c3c3"/><path d="M4 11L.2 6.4h7.6z" fill="#c3c3c3"/></svg>
<svg class="b" style="left:878.3px;top:267.8px" width="8" height="11" viewBox="0 0 8 11"><path d="M4 0l3.8 4.6H.2z" fill="#c3c3c3"/><path d="M4 11L.2 6.4h7.6z" fill="#c3c3c3"/></svg>
<svg class="b" style="left:977px;top:267.8px" width="8" height="11" viewBox="0 0 8 11"><path d="M4 0l3.8 4.6H.2z" fill="#c3c3c3"/><path d="M4 11L.2 6.4h7.6z" fill="#c3c3c3"/></svg>
<svg class="b" style="left:1061.7px;top:267.8px" width="8" height="11" viewBox="0 0 8 11"><path d="M4 0l3.8 4.6H.2z" fill="#c3c3c3"/><path d="M4 11L.2 6.4h7.6z" fill="#c3c3c3"/></svg>
<svg class="b" style="left:1151px;top:267.8px" width="8" height="11" viewBox="0 0 8 11"><path d="M4 0l3.8 4.6H.2z" fill="#c3c3c3"/><path d="M4 11L.2 6.4h7.6z" fill="#c3c3c3"/></svg>
<svg class="b" style="left:1239.7px;top:267.8px" width="8" height="11" viewBox="0 0 8 11"><path d="M4 0l3.8 4.6H.2z" fill="#c3c3c3"/><path d="M4 11L.2 6.4h7.6z" fill="#c3c3c3"/></svg>
<svg class="b" style="left:1324.7px;top:267.8px" width="8" height="11" viewBox="0 0 8 11"><path d="M4 0l3.8 4.6H.2z" fill="#c3c3c3"/><path d="M4 11L.2 6.4h7.6z" fill="#c3c3c3"/></svg>
<svg class="b" style="left:524.5px;top:267.8px" width="8" height="11" viewBox="0 0 8 11"><path d="M4 0l3.8 4.6H.2z" fill="#d0d0d0"/><path d="M4 11L.2 6.4h7.6z" fill="#2b2b2b"/></svg>
<svg class="b" style="left:311.4px;top:264.3px" width="17" height="17" viewBox="0 0 17 17"><circle cx="8.5" cy="8.5" r="8.100" fill="#9bd5f5"/><circle cx="8.5" cy="8.5" r="6.700" fill="#22a0e8"/><text x="8.500" y="12.600" text-anchor="middle" font-family="Liberation Sans,sans-serif" font-weight="700" font-size="11.500" fill="#fff">?</text></svg>
<svg class="b" style="left:575.4px;top:253.4px" width="17" height="17" viewBox="0 0 17 17"><circle cx="8.5" cy="8.5" r="8.100" fill="#9bd5f5"/><circle cx="8.5" cy="8.5" r="6.700" fill="#22a0e8"/><text x="8.500" y="12.600" text-anchor="middle" font-family="Liberation Sans,sans-serif" font-weight="700" font-size="11.500" fill="#fff">?</text></svg>
<span class="t" id="h1" style="left:83.10px;top:272.51px;font-size:11.5px;color:#1a1a1a;font-weight:500;letter-spacing:-0.075px;-webkit-text-stroke:.22px #1a1a1a;">地段位置或門牌</span>
<span class="t" id="h2" style="left:260.90px;top:267.36px;font-size:11.5px;color:#1a1a1a;font-weight:500;letter-spacing:0.360px;-webkit-text-stroke:.22px #1a1a1a;">社區簡稱</span>
<span class="t" id="h3" style="left:369.60px;top:272.26px;font-size:11.5px;color:#1a1a1a;font-weight:500;letter-spacing:0.108px;-webkit-text-stroke:.22px #1a1a1a;">總價(萬元)</span>
<span class="t" id="h4" style="left:462.90px;top:272.31px;font-size:11.5px;color:#1a1a1a;font-weight:500;letter-spacing:0.210px;-webkit-text-stroke:.22px #1a1a1a;">交易日期</span>
<span class="t" id="h5a" style="left:548.90px;top:254.86px;font-size:11.5px;color:#1a1a1a;font-weight:500;letter-spacing:-0.450px;-webkit-text-stroke:.22px #1a1a1a;">單價</span>
<span class="t" id="h5b" style="left:547.90px;top:272.56px;font-size:11.5px;color:#1a1a1a;font-weight:500;letter-spacing:0.216px;-webkit-text-stroke:.22px #1a1a1a;">(萬元/坪)</span>
<span class="t" id="h6a" style="left:633.00px;top:260.56px;font-size:11.5px;color:#1a1a1a;font-weight:500;letter-spacing:-0.225px;-webkit-text-stroke:.22px #1a1a1a;">總面積</span>
<span class="t" id="h6b" style="left:638.50px;top:272.56px;font-size:11.5px;color:#1a1a1a;font-weight:500;letter-spacing:0.450px;-webkit-text-stroke:.22px #1a1a1a;">(坪)</span>
<span class="t" id="h7a" style="left:707.50px;top:260.56px;font-size:11.5px;color:#1a1a1a;font-weight:500;letter-spacing:0.225px;-webkit-text-stroke:.22px #1a1a1a;">主建物</span>
<span class="t" id="h7b" style="left:705.60px;top:272.56px;font-size:11.5px;color:#1a1a1a;font-weight:500;letter-spacing:-0.225px;-webkit-text-stroke:.22px #1a1a1a;">佔比(%)</span>
<span class="t" id="h8" style="left:782.50px;top:272.31px;font-size:11.5px;color:#1a1a1a;font-weight:500;letter-spacing:-0.090px;-webkit-text-stroke:.22px #1a1a1a;">型態</span>
<span class="t" id="h9" style="left:841.40px;top:272.31px;font-size:11.5px;color:#1a1a1a;font-weight:500;letter-spacing:0.450px;-webkit-text-stroke:.22px #1a1a1a;">屋齡</span>
<span class="t" id="h10" style="left:908.00px;top:272.31px;font-size:11.5px;color:#1a1a1a;font-weight:500;letter-spacing:-0.135px;-webkit-text-stroke:.22px #1a1a1a;">樓別/樓高</span>
<span class="t" id="h11" style="left:1001.10px;top:272.31px;font-size:11.5px;color:#1a1a1a;font-weight:500;letter-spacing:-0.090px;-webkit-text-stroke:.22px #1a1a1a;">主要用途</span>
<span class="t" id="h12" style="left:1087.00px;top:272.31px;font-size:11.5px;color:#1a1a1a;font-weight:500;letter-spacing:0.270px;-webkit-text-stroke:.22px #1a1a1a;">交易標的</span>
<span class="t" id="h13" style="left:1175.90px;top:272.31px;font-size:11.5px;color:#1a1a1a;font-weight:500;letter-spacing:-0.060px;-webkit-text-stroke:.22px #1a1a1a;">建物格局</span>
<span class="t" id="h14a" style="left:1262.90px;top:260.56px;font-size:11.5px;color:#1a1a1a;font-weight:500;letter-spacing:0.210px;-webkit-text-stroke:.22px #1a1a1a;">車位總價</span>
<span class="t" id="h14b" style="left:1271.10px;top:272.56px;font-size:11.5px;color:#1a1a1a;font-weight:500;letter-spacing:-0.120px;-webkit-text-stroke:.22px #1a1a1a;">(萬元)</span>
<svg class="b" style="left:21.200px;top:297.1px" width="18" height="18" viewBox="0 0 18 18"><circle cx="9" cy="9.300" r="8" fill="#7d7d7d" opacity=".7"/><circle cx="9" cy="9.200" r="7.250" fill="#fff"/><circle cx="9" cy="9.200" r="6.250" fill="url(#pgrad)"/><path d="M9.100 3.500v7.600M5.100 7.400h8" stroke="#fff" stroke-width="1.200"/></svg>
<span class="t" id="a0" style="left:45.60px;top:301.28px;font-size:12.8px;color:#ab5a2c;letter-spacing:0.170px;">東區仁和路３３號八樓</span>
<span class="t" id="c0" style="left:260.60px;top:302.78px;font-size:13.6px;color:#212529;letter-spacing:0.135px;">太子峰雲會</span>
<span class="t" id="p0" style="left:369.50px;top:299.68px;font-size:13.6px;color:#212529;letter-spacing:0.113px;">2,500</span>
<div class="b" style="left:404.7px;top:300.0px;width:13.399999999999977px;height:16.80000000000001px;background:#7b42d1;border-radius:2.500px"></div>
<span class="t" id="pb0" style="left:404.90px;top:300.56px;font-size:12.4px;color:#fff;font-weight:500;">車</span>
<span class="t" id="d0" style="left:464.40px;top:300.38px;font-size:13.6px;color:#212529;letter-spacing:-0.079px;">114/02/17</span>
<span class="t" id="u0" style="left:549.40px;top:299.38px;font-size:13.6px;color:#212529;letter-spacing:-0.023px;">38.66</span>
<div class="b" style="left:584px;top:300.0px;width:13.399999999999977px;height:16.80000000000001px;background:#7b42d1;border-radius:2.500px"></div>
<span class="t" id="ub0" style="left:584.20px;top:300.56px;font-size:12.4px;color:#fff;font-weight:500;">車</span>
<span class="t" id="ar0" style="left:632.60px;top:300.38px;font-size:13.6px;color:#212529;letter-spacing:0.023px;">64.67</span>
<span class="t" id="ra0" style="left:705.60px;top:300.38px;font-size:13.6px;color:#212529;letter-spacing:0.023px;">59.68</span>
<div class="b" style="left:785px;top:300.0px;width:13.399999999999977px;height:16.80000000000001px;background:#df7aba;border-radius:2.500px"></div>
<span class="t" id="tb0" style="left:785.90px;top:300.56px;font-size:12.4px;color:#fff;font-weight:500;">樓</span>
<span class="t" id="ag0" style="left:844.50px;top:300.38px;font-size:13.6px;color:#212529;">13</span>
<span class="t" id="fl0" style="left:903.50px;top:301.98px;font-size:13.6px;color:#212529;letter-spacing:0.180px;">八層/十三層</span>
<span class="t" id="us0" style="left:1002.00px;top:302.18px;font-size:13.6px;color:#212529;letter-spacing:-0.180px;">住家用</span>
<div class="b" style="left:1086.8px;top:300.0px;width:12.799999999999955px;height:16.80000000000001px;background:#ff8205;border-radius:2.500px"></div>
<span class="t" id="b10" style="left:1087.00px;top:301.56px;font-size:12.4px;color:#fff;font-weight:500;">土</span>
<span class="t" id="n10" style="left:1100.70px;top:299.38px;font-size:13.6px;color:#212529;">1</span>
<div class="b" style="left:1111.7px;top:300.0px;width:12.200000000000045px;height:16.80000000000001px;background:#0a9a1a;border-radius:2.500px"></div>
<span class="t" id="b20" style="left:1111.90px;top:300.56px;font-size:12.4px;color:#fff;font-weight:500;">建</span>
<span class="t" id="n20" style="left:1124.50px;top:299.38px;font-size:13.6px;color:#212529;">1</span>
<div class="b" style="left:1132px;top:300.0px;width:12.799999999999955px;height:16.80000000000001px;background:#7b42d1;border-radius:2.500px"></div>
<span class="t" id="b30" style="left:1132.60px;top:300.56px;font-size:12.4px;color:#fff;font-weight:500;">車</span>
<span class="t" id="n30" style="left:1145.40px;top:299.38px;font-size:13.6px;color:#212529;">1</span>
<span class="t" id="ly0" style="left:1175.90px;top:301.93px;font-size:13.6px;color:#212529;letter-spacing:-0.054px;">3房2廳2衛</span>
<svg class="b" style="left:21.200px;top:329.3px" width="18" height="18" viewBox="0 0 18 18"><circle cx="9" cy="9.300" r="8" fill="#7d7d7d" opacity=".7"/><circle cx="9" cy="9.200" r="7.250" fill="#fff"/><circle cx="9" cy="9.200" r="6.250" fill="url(#pgrad)"/><path d="M9.100 3.500v7.600M5.100 7.400h8" stroke="#fff" stroke-width="1.200"/></svg>
<span class="t" id="a1" style="left:45.60px;top:332.68px;font-size:12.8px;color:#ab5a2c;letter-spacing:0.170px;">東區仁和路２７號十樓</span>
<span class="t" id="c1" style="left:260.60px;top:335.18px;font-size:13.6px;color:#212529;letter-spacing:0.135px;">太子峰雲會</span>
<span class="t" id="p1" style="left:369.50px;top:332.08px;font-size:13.6px;color:#212529;letter-spacing:0.113px;">2,288</span>
<div class="b" style="left:404.7px;top:332.20000000000005px;width:13.399999999999977px;height:16.80000000000001px;background:#7b42d1;border-radius:2.500px"></div>
<span class="t" id="pb1" style="left:404.90px;top:333.46px;font-size:12.4px;color:#fff;font-weight:500;">車</span>
<span class="t" id="d1" style="left:464.40px;top:332.78px;font-size:13.6px;color:#212529;letter-spacing:-0.079px;">113/06/15</span>
<span class="t" id="u1" style="left:549.40px;top:331.78px;font-size:13.6px;color:#212529;letter-spacing:-0.023px;">31.96</span>
<div class="b" style="left:584px;top:332.20000000000005px;width:13.399999999999977px;height:16.80000000000001px;background:#7b42d1;border-radius:2.500px"></div>
<span class="t" id="ub1" style="left:584.20px;top:333.46px;font-size:12.4px;color:#fff;font-weight:500;">車</span>
<span class="t" id="ar1" style="left:632.60px;top:332.78px;font-size:13.6px;color:#212529;letter-spacing:0.023px;">71.59</span>
<span class="t" id="ra1" style="left:705.60px;top:332.78px;font-size:13.6px;color:#212529;letter-spacing:0.023px;">57.38</span>
<div class="b" style="left:785px;top:332.20000000000005px;width:13.399999999999977px;height:16.80000000000001px;background:#df7aba;border-radius:2.500px"></div>
<span class="t" id="tb1" style="left:785.90px;top:333.46px;font-size:12.4px;color:#fff;font-weight:500;">樓</span>
<span class="t" id="ag1" style="left:844.50px;top:332.78px;font-size:13.6px;color:#212529;">12</span>
<span class="t" id="fl1" style="left:903.50px;top:334.38px;font-size:13.6px;color:#212529;letter-spacing:0.180px;">十層/十三層</span>
<span class="t" id="us1" style="left:1002.00px;top:334.58px;font-size:13.6px;color:#212529;letter-spacing:-0.180px;">住家用</span>
<div class="b" style="left:1086.8px;top:332.20000000000005px;width:12.799999999999955px;height:16.80000000000001px;background:#ff8205;border-radius:2.500px"></div>
<span class="t" id="b11" style="left:1087.00px;top:333.96px;font-size:12.4px;color:#fff;font-weight:500;">土</span>
<span class="t" id="n11" style="left:1100.70px;top:331.78px;font-size:13.6px;color:#212529;">1</span>
<div class="b" style="left:1111.7px;top:332.20000000000005px;width:12.200000000000045px;height:16.80000000000001px;background:#0a9a1a;border-radius:2.500px"></div>
<span class="t" id="b21" style="left:1111.90px;top:333.46px;font-size:12.4px;color:#fff;font-weight:500;">建</span>
<span class="t" id="n21" style="left:1124.50px;top:331.78px;font-size:13.6px;color:#212529;">1</span>
<div class="b" style="left:1132px;top:332.20000000000005px;width:12.799999999999955px;height:16.80000000000001px;background:#7b42d1;border-radius:2.500px"></div>
<span class="t" id="b31" style="left:1132.60px;top:333.46px;font-size:12.4px;color:#fff;font-weight:500;">車</span>
<span class="t" id="n31" style="left:1145.40px;top:331.78px;font-size:13.6px;color:#212529;">1</span>
<span class="t" id="ly1" style="left:1175.90px;top:334.33px;font-size:13.6px;color:#212529;letter-spacing:-0.054px;">3房2廳2衛</span>
<svg class="b" style="left:21.200px;top:361.7px" width="18" height="18" viewBox="0 0 18 18"><circle cx="9" cy="9.300" r="8" fill="#7d7d7d" opacity=".7"/><circle cx="9" cy="9.200" r="7.250" fill="#fff"/><circle cx="9" cy="9.200" r="6.250" fill="url(#pgrad)"/><path d="M9.100 3.500v7.600M5.100 7.400h8" stroke="#fff" stroke-width="1.200"/></svg>
<span class="t" id="a2" style="left:45.60px;top:365.48px;font-size:12.8px;color:#ab5a2c;letter-spacing:0.170px;">東區仁和路３１號五樓</span>
<span class="t" id="c2" style="left:260.60px;top:367.48px;font-size:13.6px;color:#212529;letter-spacing:0.135px;">太子峰雲會</span>
<span class="t" id="p2" style="left:369.50px;top:364.88px;font-size:13.6px;color:#212529;letter-spacing:0.113px;">2,630</span>
<div class="b" style="left:404.7px;top:364.6px;width:13.399999999999977px;height:16.80000000000001px;background:#7b42d1;border-radius:2.500px"></div>
<span class="t" id="pb2" style="left:404.90px;top:365.76px;font-size:12.4px;color:#fff;font-weight:500;">車</span>
<span class="t" id="d2" style="left:464.40px;top:364.68px;font-size:13.6px;color:#212529;letter-spacing:-0.079px;">113/05/03</span>
<span class="t" id="u2" style="left:549.40px;top:363.68px;font-size:13.6px;color:#212529;letter-spacing:-0.180px;">36.5</span>
<div class="b" style="left:576.5px;top:364.6px;width:13.399999999999977px;height:16.80000000000001px;background:#7b42d1;border-radius:2.500px"></div>
<span class="t" id="ub2" style="left:576.70px;top:365.76px;font-size:12.4px;color:#fff;font-weight:500;">車</span>
<span class="t" id="ar2" style="left:632.60px;top:364.68px;font-size:13.6px;color:#212529;letter-spacing:0.023px;">72.06</span>
<span class="t" id="ra2" style="left:705.60px;top:364.68px;font-size:13.6px;color:#212529;letter-spacing:0.023px;">59.68</span>
<div class="b" style="left:785px;top:364.6px;width:13.399999999999977px;height:16.80000000000001px;background:#df7aba;border-radius:2.500px"></div>
<span class="t" id="tb2" style="left:785.90px;top:365.76px;font-size:12.4px;color:#fff;font-weight:500;">樓</span>
<span class="t" id="ag2" style="left:844.50px;top:364.68px;font-size:13.6px;color:#212529;">12</span>
<span class="t" id="fl2" style="left:903.50px;top:366.68px;font-size:13.6px;color:#212529;letter-spacing:0.180px;">五層/十三層</span>
<span class="t" id="us2" style="left:1002.00px;top:366.88px;font-size:13.6px;color:#212529;letter-spacing:-0.180px;">住家用</span>
<div class="b" style="left:1086.8px;top:364.6px;width:12.799999999999955px;height:16.80000000000001px;background:#ff8205;border-radius:2.500px"></div>
<span class="t" id="b12" style="left:1087.00px;top:366.26px;font-size:12.4px;color:#fff;font-weight:500;">土</span>
<span class="t" id="n12" style="left:1100.70px;top:363.68px;font-size:13.6px;color:#212529;">1</span>
<div class="b" style="left:1111.7px;top:364.6px;width:12.200000000000045px;height:16.80000000000001px;background:#0a9a1a;border-radius:2.500px"></div>
<span class="t" id="b22" style="left:1111.90px;top:365.76px;font-size:12.4px;color:#fff;font-weight:500;">建</span>
<span class="t" id="n22" style="left:1124.50px;top:363.68px;font-size:13.6px;color:#212529;">1</span>
<div class="b" style="left:1132px;top:364.6px;width:12.799999999999955px;height:16.80000000000001px;background:#7b42d1;border-radius:2.500px"></div>
<span class="t" id="b32" style="left:1132.60px;top:365.76px;font-size:12.4px;color:#fff;font-weight:500;">車</span>
<span class="t" id="n32" style="left:1145.10px;top:363.68px;font-size:13.6px;color:#212529;">2</span>
<span class="t" id="ly2" style="left:1175.90px;top:366.63px;font-size:13.6px;color:#212529;letter-spacing:-0.054px;">3房2廳2衛</span>
<div class="b" style="left:18px;top:396px;width:1335px;height:30px;background:#e9e9e9"></div>
<span class="t" id="info" style="left:26.45px;top:409.68px;font-size:12px;color:#222;letter-spacing:-0.264px;">顯示 1 至 3 筆 (查詢結果 : 3 筆)</span>
<div class="b" style="left:0px;top:448px;width:1366px;height:4px;background:#5e5e5e"></div>
<div class="b" style="left:0px;top:452px;width:1366px;height:11px;background:#777"></div>
<div class="b" style="left:0px;top:463px;width:1366px;height:31px;background:#e5d9c5"></div>
<span class="t" id="f1" style="left:411.10px;top:470.85px;font-size:13.4px;color:#a6875a;letter-spacing:0.980px;">網站安全政策</span>
<span class="t" id="f2" style="left:632.50px;top:470.85px;font-size:13.4px;color:#a6875a;letter-spacing:1.175px;">隱私權保護政策</span>
<span class="t" id="f3" style="left:840.50px;top:470.85px;font-size:13.4px;color:#a6875a;letter-spacing:1.050px;">政府網站資料開放宣告</span>
<span class="t" id="copy" style="left:454.10px;top:505.24px;font-size:12.6px;color:#777;letter-spacing:0.017px;">©Copyright All Rights Reserved By 內 政 部 (Dept of Land Administration M. O. I. )</span>
<div class="b" style="left:1354px;top:30px;width:12px;height:738px;background:linear-gradient(90deg,rgba(0,0,0,0) 0,rgba(0,0,0,.012) 25%,rgba(0,0,0,.05) 50%,rgba(0,0,0,.13) 75%,rgba(0,0,0,.27) 100%);-webkit-mask-image:linear-gradient(rgba(0,0,0,0) 0,#000 14px);mask-image:linear-gradient(rgba(0,0,0,0) 0,#000 14px)"></div>
<div class="b" style="left:0px;top:93px;width:4px;height:675px;background:linear-gradient(90deg,rgba(0,0,0,.1),rgba(0,0,0,0))"></div>
</body></html>
